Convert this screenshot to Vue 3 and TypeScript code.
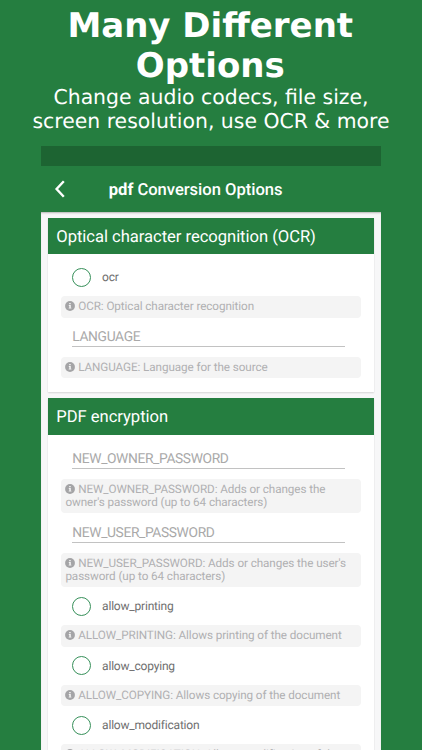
<script setup lang="ts">
interface Option {
  kind: 'radio' | 'text'
  label: string
  hint: string
}

interface Section {
  title: string
  options: Option[]
}

const sections: Section[] = [
  {
    title: 'Optical character recognition (OCR)',
    options: [
      { kind: 'radio', label: 'ocr', hint: 'OCR: Optical character recognition' },
      { kind: 'text', label: 'LANGUAGE', hint: 'LANGUAGE: Language for the source' },
    ],
  },
  {
    title: 'PDF encryption',
    options: [
      { kind: 'text', label: 'NEW_OWNER_PASSWORD', hint: "NEW_OWNER_PASSWORD: Adds or changes the owner's password (up to 64 characters)" },
      { kind: 'text', label: 'NEW_USER_PASSWORD', hint: "NEW_USER_PASSWORD: Adds or changes the user's password (up to 64 characters)" },
      { kind: 'radio', label: 'allow_printing', hint: 'ALLOW_PRINTING: Allows printing of the document' },
      { kind: 'radio', label: 'allow_copying', hint: 'ALLOW_COPYING: Allows copying of the document' },
      { kind: 'radio', label: 'allow_modification', hint: 'ALLOW_MODIFICATION: Allows modification of the document' },
    ],
  },
]
</script>

<template>
  <main class="poster">
    <header class="promo">
      <h1>Many Different<br />Options</h1>
      <p>Change audio codecs, file size,<br />screen resolution, use OCR &amp; more</p>
    </header>
    <div class="phone">
      <div class="status"></div>
      <div class="appbar">
        <svg class="back" viewBox="0 0 12 18" width="12" height="18">
          <path d="M9.8 1.3 2.6 9l7.2 7.7" fill="none" stroke="#fff" stroke-width="2.4" />
        </svg>
        <span class="bar-title"><b>pdf</b> Conversion Options</span>
      </div>
      <div class="content">
        <section v-for="s in sections" :key="s.title" class="card">
          <h2>{{ s.title }}</h2>
          <div class="body">
            <template v-for="o in s.options" :key="o.label">
              <div v-if="o.kind === 'radio'" class="radio">
                <span class="circle"></span>
                <span>{{ o.label }}</span>
              </div>
              <div v-else class="field">
                <span class="input">{{ o.label }}</span>
              </div>
              <div class="hint">
                <svg class="info" viewBox="0 0 10 10" width="10" height="10">
                  <circle cx="5" cy="5" r="4.9" fill="#a4a4a6" />
                  <path d="M4.2 2h1.5v1.3H4.2zM3.8 4.1h2v2.7h.6v.8H3.7v-.8h.6V4.9h-.5z" fill="#f4f4f4" />
                </svg>
                {{ o.hint }}
              </div>
            </template>
          </div>
        </section>
      </div>
    </div>
  </main>
</template>

<style>
body {
  margin: 0;
  background: #257e40;
}
</style>

<style scoped>
.poster {
  width: 422px;
  height: 750px;
  overflow: hidden;
  display: flex;
  flex-direction: column;
  background: #257e40;
  color: #fff;
  text-rendering: geometricPrecision;
}
.promo {
  height: 146.3px;
  flex: none;
  box-sizing: border-box;
  padding-top: 6px;
  text-align: center;
  white-space: nowrap;
  font-family: "DejaVu Sans", sans-serif;
}
h1 {
  margin: 0;
  padding-right: 1.5px;
  font-size: 34px;
  line-height: 40px;
  font-weight: 700;
}
.promo p {
  margin: 0;
  font-size: 20.4px;
  line-height: 23.8px;
}
.phone {
  width: 339.5px;
  margin-left: 41.3px;
  flex: none;
  font-family: Roboto, sans-serif;
}
.status {
  height: 19.7px;
  background: #1d6432;
}
.appbar {
  height: 46.3px;
  display: flex;
  align-items: center;
}
.back {
  margin-left: 13px;
}
.bar-title {
  margin-left: 42.5px;
  padding-top: 2.4px;
  font-size: 16.6px;
  font-weight: 500;
  letter-spacing: -0.03px;
}
.bar-title b {
  font-weight: 700;
}
.content {
  height: 540px;
  box-sizing: border-box;
  padding: 5.3px 6.5px 0;
  background: #f7f7f8;
  box-shadow: inset 0 2px 2px -1px #b5b5b5;
}
.card {
  margin-bottom: 6.8px;
  background: #fff;
  box-shadow: 0 1px 1.5px #0002;
}
h2 {
  height: 36.2px;
  box-sizing: border-box;
  margin: 0;
  padding: 2px 0 0 8.5px;
  background: #257e40;
  font-size: 16.6px;
  line-height: 36.2px;
  font-weight: 400;
  letter-spacing: -0.04px;
}
.body {
  padding: 4.3px 13.3px 13.4px;
}
.radio {
  height: 38.4px;
  display: flex;
  align-items: center;
  gap: 11px;
  padding-left: 11px;
  color: #6f6f6f;
  font-size: 12px;
  letter-spacing: -0.2px;
}
.circle {
  width: 19px;
  height: 19px;
  box-sizing: border-box;
  border: 1px solid #37905a;
  border-radius: 50%;
}
.field {
  height: 39.7px;
  box-sizing: border-box;
  padding: 10.7px 16.5px 0 11.2px;
}
.input {
  display: block;
  height: 18px;
  border-bottom: 1px solid #c2c2c2;
  color: #a9a9a9;
  font-size: 13.8px;
  line-height: 18px;
  letter-spacing: -0.36px;
}
.hint {
  box-sizing: border-box;
  padding: 3.9px 4.3px;
  border-radius: 4px;
  background: #f4f4f4;
  color: #b0b0b2;
  font-size: 11.7px;
  line-height: 13.3px;
  letter-spacing: -0.08px;
}
.info {
  vertical-align: -1px;
}
</style>
